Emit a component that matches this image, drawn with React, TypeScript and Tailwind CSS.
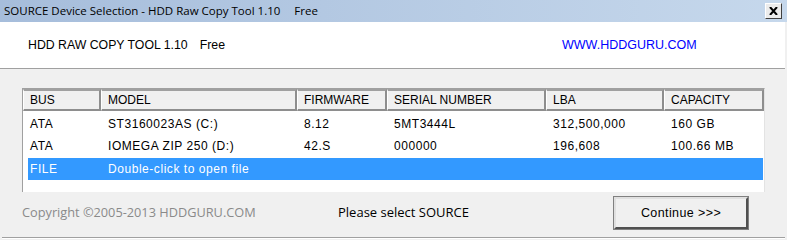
import React from "react";

const cols = [
  { label: "BUS", w: 78 },
  { label: "MODEL", w: 196 },
  { label: "FIRMWARE", w: 90 },
  { label: "SERIAL NUMBER", w: 159 },
  { label: "LBA", w: 118 },
  { label: "CAPACITY", w: 100 },
];

const rows = [
  ["ATA", "ST3160023AS (C:)", "8.12", "5MT3444L", "312,500,000", "160 GB"],
  ["ATA", "IOMEGA ZIP 250 (D:)", "42.S", "000000", "196,608", "100.66 MB"],
];

export default function App() {
  const sans = { fontFamily: '"Liberation Sans", Arial, sans-serif' };
  const ui = { fontFamily: '"Open Sans", "Noto Sans", sans-serif' };
  return (
    <div className="w-[787px] h-[240px] bg-[#f0f0f0] flex flex-col overflow-hidden">
      {/* Title bar */}
      <div className="h-[22px] flex items-center justify-between pl-[4px] pr-[5px] bg-gradient-to-r from-[#a6bddb] to-[#c6d8ec]">
        <span className="text-[11.5px] text-black leading-none whitespace-nowrap" style={ui}>
          SOURCE Device Selection - HDD Raw Copy Tool 1.10
          <span className="ml-[14px]">Free</span>
        </span>
        <div className="w-[17px] h-[16px] bg-[#ececec] border border-t-white border-l-white border-r-[#404040] border-b-[#404040] flex items-center justify-center">
          <svg width="9" height="8" viewBox="0 0 9 8">
            <path d="M1 0 L8 8 M8 0 L1 8" stroke="#000" strokeWidth="2" />
          </svg>
        </div>
      </div>

      {/* Header */}
      <div className="h-[47px] bg-white border-b border-[#a0a0a0] flex items-center mr-[2px]">
        <span className="ml-[28px] w-[534px] text-[12.3px] text-black whitespace-nowrap" style={sans}>
          HDD RAW COPY TOOL 1.10
          <span className="ml-[12px]">Free</span>
        </span>
        <span className="text-[12.5px] text-[#0000ff]" style={sans}>
          WWW.HDDGURU.COM
        </span>
      </div>

      {/* List */}
      <div className="mx-[22px] mt-[19px] h-[104px] bg-white border-l border-t border-[#a0a0a0] border-r border-r-[#e3e3e3] flex flex-col">
        <div className="flex h-[22px]">
          {cols.map((c) => (
            <div
              key={c.label}
              className="h-[22px] bg-[#f0f0f0] border-t-2 border-l border-t-[#a0a0a0] border-l-white border-r-2 border-b-2 border-r-[#8e8e8e] border-b-[#8e8e8e] flex items-center pl-[6px] text-[12px] text-black"
              style={{ ...sans, width: c.w }}
            >
              {c.label}
            </div>
          ))}
        </div>
        <div className="pt-[2px] flex flex-col">
          {rows.map((r, i) => (
            <div key={i} className="flex h-[22px] items-center">
              {r.map((v, j) => (
                <div
                  key={j}
                  className="pl-[7px] text-[12px] tracking-[0.55px] text-black whitespace-nowrap"
                  style={{ ...sans, width: cols[j].w }}
                >
                  {v}
                </div>
              ))}
            </div>
          ))}
          <div className="flex h-[22px] items-center bg-[#3399ff] mt-[1px] ml-[5px] mr-[1px] text-white text-[12px] tracking-[0.55px]" style={sans}>
            <div className="pl-[2px] w-[73px]">FILE</div>
            <div className="pl-[7px]">Double-click to open file</div>
          </div>
        </div>
      </div>

      {/* Footer */}
      <div className="flex items-center h-[38px] mt-[2px]">
        <span className="ml-[22px] w-[316px] text-[12.75px] text-[#8a8a8a]" style={ui}>
          Copyright ©2005-2013 HDDGURU.COM
        </span>
        <span className="w-[276px] text-[13px] text-black" style={ui}>
          Please select SOURCE
        </span>
        <button
          className="w-[134px] h-[32px] bg-[#f0f0f0] border-2 border-t-[#e0e0e0] border-l-[#e0e0e0] border-r-[#505050] border-b-[#505050] outline outline-1 outline-[#808080] text-[12.5px] tracking-[0.4px] text-black flex items-center justify-center"
          style={sans}
        >
          Continue &gt;&gt;&gt;
        </button>
      </div>
      <div className="mt-[5px] mx-[2px] border-t border-[#a0a0a0] border-b border-b-white" />
    </div>
  );
}
